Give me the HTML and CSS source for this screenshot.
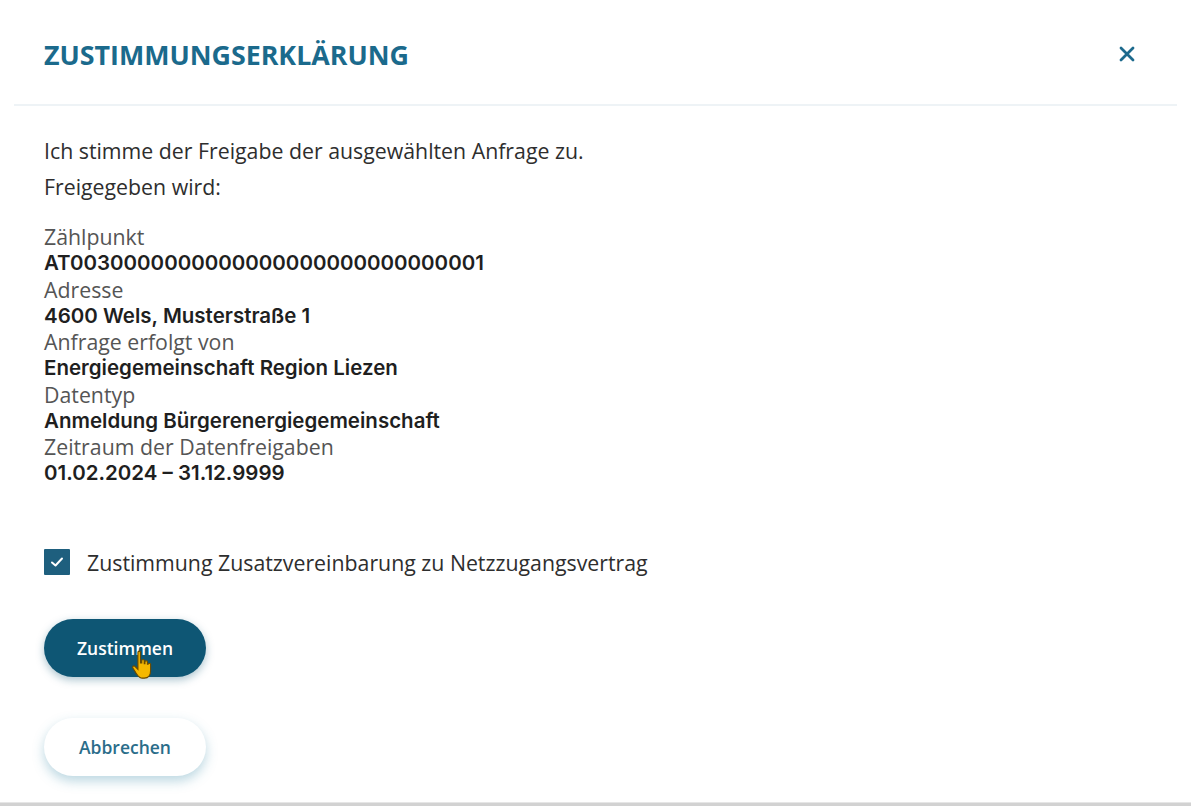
FILE: index.html
```html
<!DOCTYPE html>
<html lang="de">
<head>
<meta charset="utf-8">
<title>Zustimmungserklärung</title>
<link rel="stylesheet" href="styles.css">
</head>
<body>
<div class="page">
  <header class="header">
    <h1 class="title">ZUSTIMMUNGSERKLÄRUNG</h1>
    <button class="close" aria-label="Schließen">
      <svg width="16" height="16" viewBox="0 0 16 16"><path d="M2 2 L14 14 M14 2 L2 14" stroke="#1d6a8d" stroke-width="2.8" stroke-linecap="round"/></svg>
    </button>
  </header>
  <main class="content">
    <p class="intro">Ich stimme der Freigabe der ausgewählten Anfrage zu.</p>
    <p class="intro second">Freigegeben wird:</p>
    <dl class="details">
      <dt>Zählpunkt</dt>
      <dd>AT0030000000000000000000000000001</dd>
      <dt>Adresse</dt>
      <dd>4600 Wels, Musterstraße 1</dd>
      <dt>Anfrage erfolgt von</dt>
      <dd>Energiegemeinschaft Region Liezen</dd>
      <dt>Datentyp</dt>
      <dd>Anmeldung Bürgerenergiegemeinschaft</dd>
      <dt>Zeitraum der Datenfreigaben</dt>
      <dd class="period">01.02.2024 – 31.12.9999</dd>
    </dl>
    <label class="consent">
      <span class="box">
        <svg width="14" height="12" viewBox="0 0 14 12"><path d="M2 6.5 L5.5 9.5 L12 2.5" fill="none" stroke="#fff" stroke-width="2" stroke-linecap="round" stroke-linejoin="round"/></svg>
      </span>
      <span class="consent-text">Zustimmung Zusatzvereinbarung zu Netzzugangsvertrag</span>
    </label>
    <div class="actions">
      <button class="btn primary">Zustimmen
        <svg class="cursor" width="28" height="33" viewBox="0 0 22 26"><path d="M7 2.5 C7 1.4 9 1.4 9 2.5 L9 11 L10 11 L10 9 C10 8 12 8 12 9 L12 11.5 L12.5 11.5 L12.5 10 C12.5 9 14.5 9 14.5 10 L14.5 12 L15 12 C15 11 17 11 17 12 L17 17 C17 20 15.5 23 12 23 L10.5 23 C8 23 7 21 5.5 19 L3 15 C2.3 14 3.5 12.8 4.6 13.6 L7 16 Z" fill="#f5b800" stroke="#6b4a00" stroke-width="0.9"/></svg>
      </button>
      <button class="btn secondary">Abbrechen</button>
    </div>
  </main>
  <div class="bottom-edge"></div>
</div>
</body>
</html>
```
FILE: styles.css
```css
* { box-sizing: border-box; }
html, body { margin: 0; padding: 0; background: #fff; }
body {
  font-family: "Open Sans", "Noto Sans", "DejaVu Sans", sans-serif;
  color: #333;
}
.page {
  width: 1191px;
  height: 806px;
  display: flex;
  flex-direction: column;
  overflow: hidden;
}
.header {
  height: 106px;
  margin: 0 14px;
  border-bottom: 2px solid #eef3f6;
  display: flex;
  align-items: center;
  justify-content: space-between;
  padding: 4px 42px 0 30px;
}
.title {
  margin: 0;
  font-size: 26.8px;
  font-weight: 700;
  color: #1b6a8c;
}
.close {
  border: 0;
  background: none;
  padding: 0;
  width: 16px;
  height: 16px;
  cursor: pointer;
}
.content {
  flex: 1;
  padding: 32px 44px 0 44px;
  display: flex;
  flex-direction: column;
}
.intro {
  margin: 0;
  font-size: 21.3px;
  line-height: 26px;
  color: #2e2e2e;
}
.intro.second { margin-top: 10px; }
.details {
  margin: 23px 0 0 0;
  display: flex;
  flex-direction: column;
}
.details dt {
  font-size: 21.3px;
  line-height: 27px;
  color: #555;
}
.details dd {
  margin: 0;
  font-family: Inter, Roboto, "Liberation Sans", sans-serif;
  font-weight: 600;
  font-size: 20.5px;
  line-height: 25.5px;
  color: #1f1f1f;
}
.consent {
  margin-top: 62px;
  display: flex;
  align-items: center;
  gap: 17px;
}
.box {
  width: 26px;
  height: 26px;
  background: #1e5f7e;
  display: flex;
  align-items: center;
  justify-content: center;
  border-radius: 1px;
}
.consent-text {
  font-size: 21.3px;
  color: #2e2e2e;
}
.actions {
  margin-top: 42px;
  display: flex;
  flex-direction: column;
  align-items: flex-start;
  gap: 41px;
}
.btn {
  width: 162px;
  height: 58px;
  border-radius: 29px;
  border: 0;
  font-family: "Open Sans", "Noto Sans", sans-serif;
  font-size: 17.5px;
  font-weight: 600;
  cursor: pointer;
}
.primary {
  position: relative;
  background: #0e5674;
  color: #fff;
  box-shadow: 0 3px 8px rgba(14, 86, 116, 0.35);
}
.cursor {
  position: absolute;
  left: 85px;
  top: 30px;
}
.secondary {
  background: #fff;
  color: #2a6d8a;
  box-shadow: 0 5px 12px rgba(60, 140, 170, 0.35);
}
.bottom-edge {
  height: 4px;
  background: #d2d2d2;
  border-top: 1px solid #e6e6e6;
}
```
